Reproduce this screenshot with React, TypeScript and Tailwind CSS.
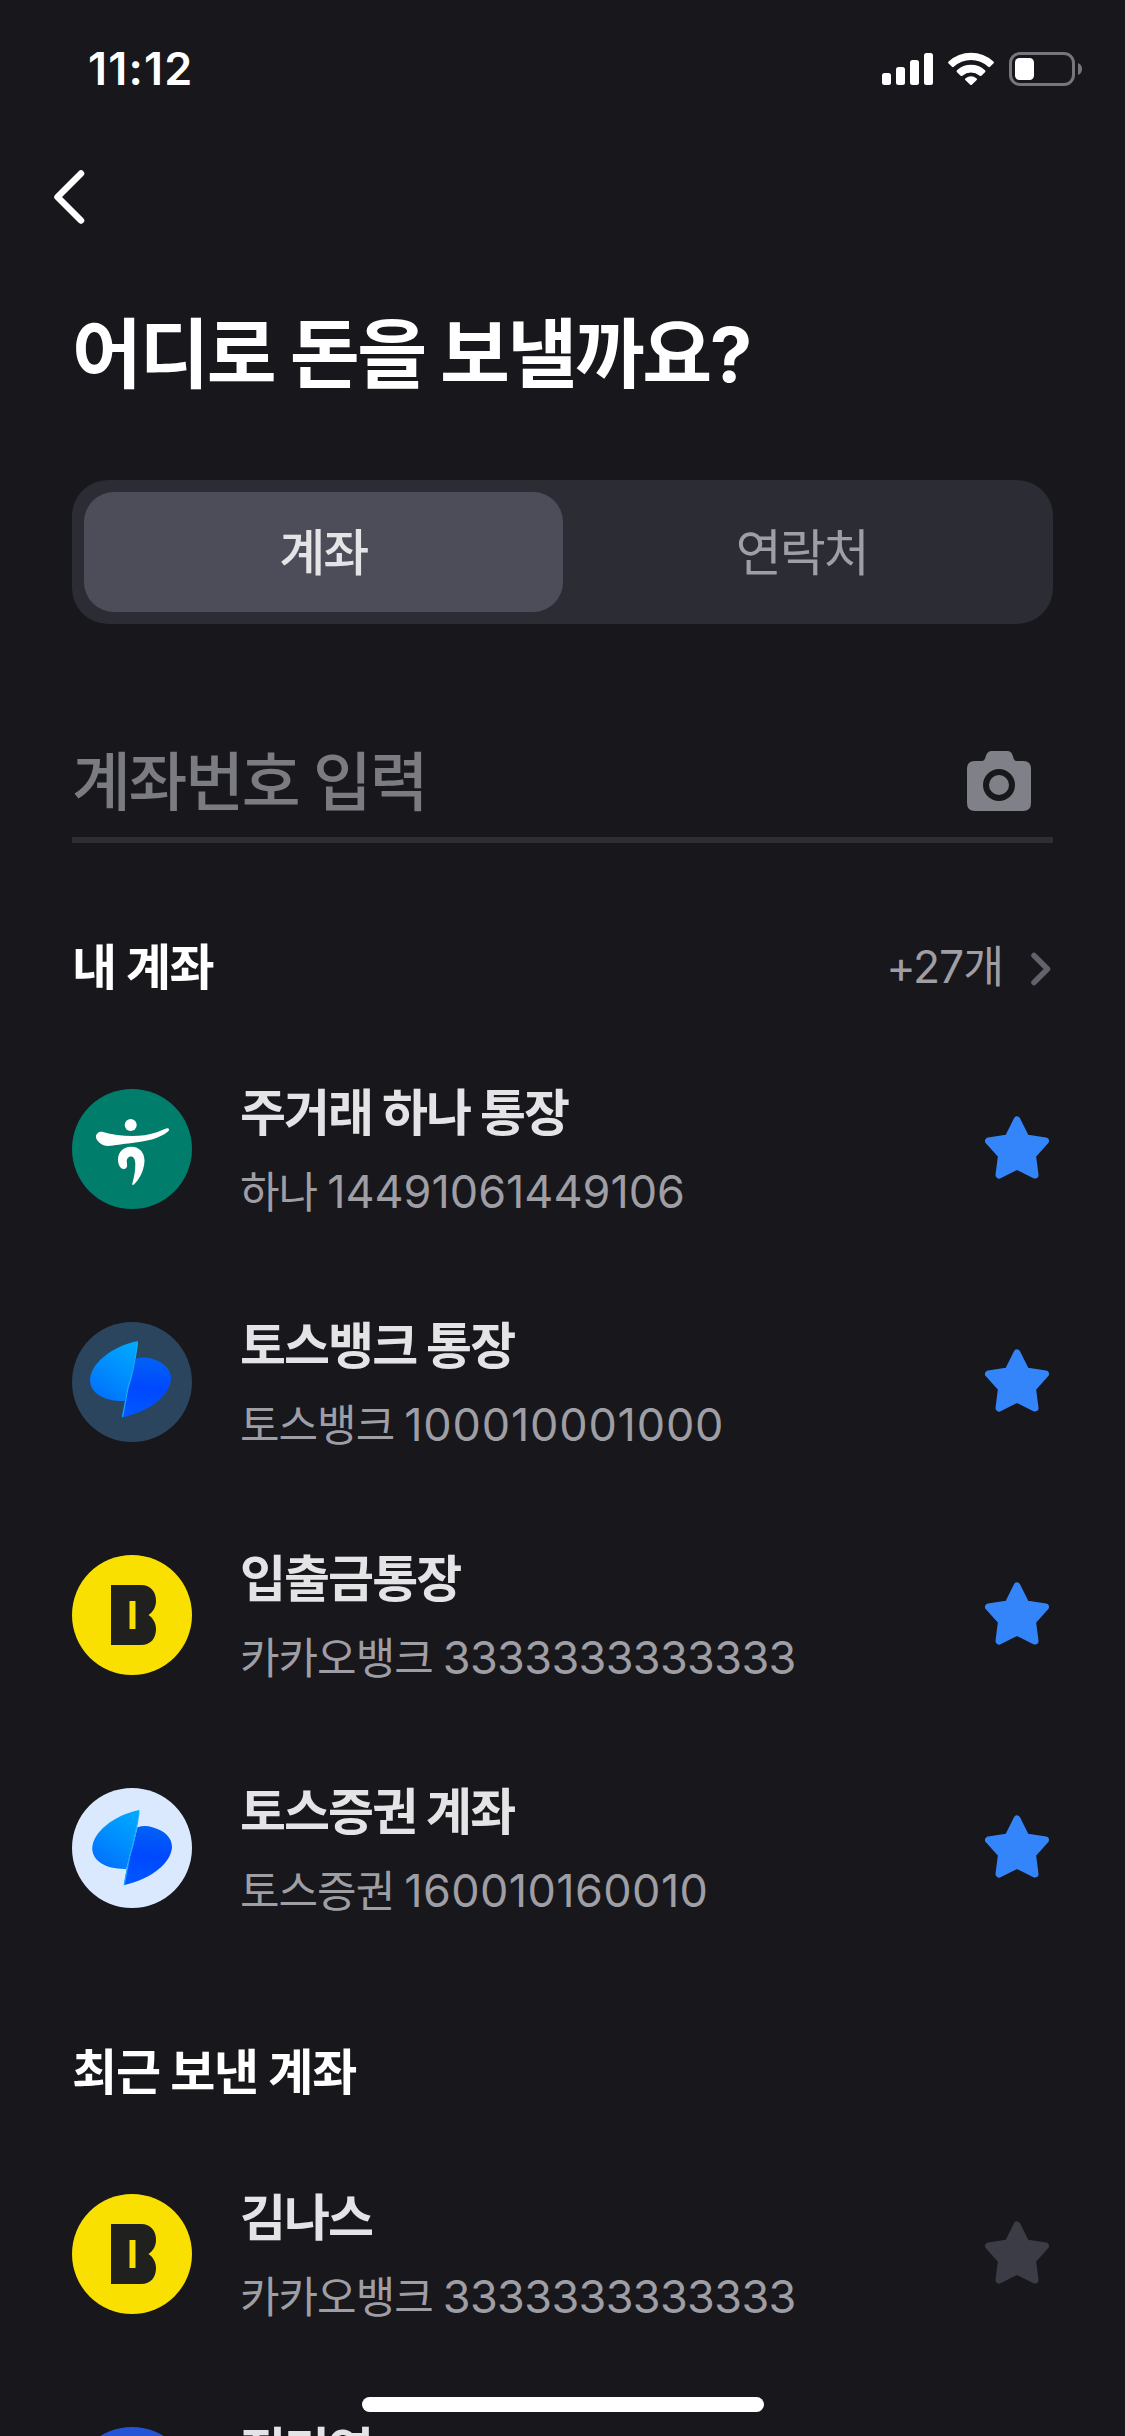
import { useState } from 'react';

type BankLogo = 'hana' | 'toss' | 'kakao' | 'toss-securities' | 'other';

interface Account {
  id: number;
  name: string;
  bank?: string;
  number?: string;
  logo: BankLogo;
  starred: boolean;
  numberClass?: string;
}

const MY_ACCOUNTS: Account[] = [
  { id: 1, name: '주거래 하나 통장', bank: '하나', number: '14491061449106', logo: 'hana', starred: true, numberClass: 'tracking-[0px]' },
  { id: 2, name: '토스뱅크 통장', bank: '토스뱅크', number: '100010001000', logo: 'toss', starred: true, numberClass: 'tracking-[0.8px]' },
  { id: 3, name: '입출금통장', bank: '카카오뱅크', number: '3333333333333', logo: 'kakao', starred: true, numberClass: 'tracking-[-0.65px]' },
  { id: 4, name: '토스증권 계좌', bank: '토스증권', number: '160010160010', logo: 'toss-securities', starred: true, numberClass: 'tracking-[0.4px]' },
];

const RECENT_ACCOUNTS: Account[] = [
  { id: 5, name: '김나스', bank: '카카오뱅크', number: '3333333333333', logo: 'kakao', starred: false, numberClass: 'tracking-[-0.65px]' },
  { id: 6, name: '전미영', logo: 'other', starred: false },
];

function StatusIcons() {
  return (
    <svg className="h-[34px] w-[201px]" viewBox="0 0 201 34" fill="none">
      <g fill="#fff">
        <rect x="0" y="21" width="9" height="12" rx="2.5" />
        <rect x="14" y="15" width="9" height="18" rx="2.5" />
        <rect x="28" y="8" width="9" height="25" rx="2.5" />
        <rect x="42" y="1" width="9" height="32" rx="2.5" />
        <path d="M66.6 9.5a33 33 0 0 1 44.8 0q1 1 0 2l-3.4 3.3q-.9.9-1.8 0a25.3 25.3 0 0 0-34.4 0q-.9.9-1.8 0L66.6 11.5q-1-1 0-2z" />
        <path d="M75 18.2a21 21 0 0 1 28 0q1 1 0 2l-3.6 3.5q-.9.8-1.8 0a13.5 13.5 0 0 0-17.2 0q-.9.8-1.8 0L75 20.2q-1-1 0-2z" />
        <path d="M83.3 26.5a9.5 9.5 0 0 1 11.4 0q.8.8 0 1.6l-4.9 4.6q-.8.7-1.6 0l-4.9-4.6q-.8-.8 0-1.6z" />
        <rect x="133" y="6" width="19" height="22" rx="4.5" />
      </g>
      <rect x="128.5" y="1.5" width="63" height="31" rx="9.5" stroke="#77777b" strokeWidth="3" />
      <path d="M196 11q4 1.5 4 6t-4 6z" fill="#77777b" />
    </svg>
  );
}

function CameraIcon() {
  return (
    <svg className="mb-0.5 h-[60px] w-[64px]" viewBox="0 0 64 60">
      <path
        d="M8 10h7q2 0 2.8-2l1.7-4.5Q21 0 24.5 0h16Q44 0 45.3 3.5L46.8 8q.7 2 2.7 2H56q8 0 8 8v34q0 8-8 8H8q-8 0-8-8V18q0-8 8-8z"
        fill="#808088"
      />
      <circle cx="32" cy="34" r="13" fill="none" stroke="#17171c" strokeWidth="6" />
    </svg>
  );
}

function StarIcon({ active }: { active: boolean }) {
  return (
    <svg className="h-[63px] w-[64px]" viewBox="0 0 64 63">
      <path
        d="M32 4 41 22 60.5 25 47.5 39.5 50 59 32 50 14 59 16.5 39.5 3.5 25 23 22Z"
        className={active ? 'fill-[#3485fa] stroke-[#3485fa]' : 'fill-[#3c3c47] stroke-[#3c3c47]'}
        strokeWidth="7"
        strokeLinejoin="round"
      />
    </svg>
  );
}

function TossMark({ id }: { id: string }) {
  return (
    <>
      <defs>
        <linearGradient id={`${id}-l`} x1="0.9" y1="0.05" x2="0.4" y2="1">
          <stop offset="0" stopColor="#00a8ff" />
          <stop offset="0.5" stopColor="#0090ff" />
          <stop offset="1" stopColor="#0074fb" />
        </linearGradient>
        <linearGradient id={`${id}-r`} x1="0.5" y1="0" x2="0.4" y2="1">
          <stop offset="0" stopColor="#0062f5" />
          <stop offset="0.5" stopColor="#0048ff" />
          <stop offset="1" stopColor="#0058ff" />
        </linearGradient>
      </defs>
      <path d="M64 36.5C69 35 74 35 79 36.5C92 40 99 47 99 57C98 72 80 89 50 95.5L53 79Z" fill={`url(#${id}-r)`} />
      <path d="M66 19C40 24 18 42 18 58C18 71 32 79.5 52.5 79Q61 50 66 19Z" fill={`url(#${id}-l)`} />
      <path d="M65.5 21Q62 48 56 66L50.5 95" stroke="#14b0ff" strokeWidth="1.2" fill="none" />
    </>
  );
}

function BankIcon({ logo, id }: { logo: BankLogo; id: number }) {
  return (
    <svg className="size-[120px] shrink-0" viewBox="0 0 120 120">
      {logo === 'hana' && (
        <>
          <circle cx="60" cy="60" r="60" fill="#007d6b" />
          <g fill="#fff">
            <circle cx="58.7" cy="36" r="6" />
            <path d="M31 43C47 47.5 68 49 84 43.5C89 41.5 92 40 95 39.2C97.3 39 97.7 41 96.3 42.3C87 50 74 52.5 60 54C50 55 43 56.5 36 57C30 57 24 52 24 48C24 44.5 27 42.3 31 43Z" />
            <path d="M59 57.8C68 57.8 72.5 64 72.5 72C72 82 67.5 90 62 95.5C60.5 96.5 60 95.5 60.3 94.5C62 88 63.5 82 63.3 75C63.2 70 61.5 67.5 59 67.5C56 67.5 54.5 70 54.8 73C55 76 55.5 76.5 54.8 78C53.5 80.5 51 80.7 49 79C46.5 76.5 46 73 46 70C46.3 63 51.5 57.8 59 57.8Z" />
          </g>
        </>
      )}
      {logo === 'toss' && (
        <>
          <circle cx="60" cy="60" r="60" fill="#2b455e" />
          <TossMark id={`toss-${id}`} />
        </>
      )}
      {logo === 'toss-securities' && (
        <>
          <circle cx="60" cy="60" r="60" fill="#dbe9ff" />
          <g transform="translate(2.5 3.2) scale(0.985)">
            <TossMark id={`toss-${id}`} />
          </g>
        </>
      )}
      {logo === 'kakao' && (
        <>
          <circle cx="60" cy="60" r="60" fill="#f9e000" />
          <path d="M39 30H69C79 30 84 37 84 46C84 52 81 57 76.5 60C81 63 84 68 84 74C84 83 79 90 69 90H39ZM57.5 46V74H63.5V46Z" fill="#20201e" fillRule="evenodd" />
        </>
      )}
      {logo === 'other' && <circle cx="60" cy="60" r="60" fill="#2455d6" />}
    </svg>
  );
}

function AccountRow({ account }: { account: Account }) {
  const [starred, setStarred] = useState(account.starred);

  return (
    <li className="flex h-[233px] items-center">
      <BankIcon logo={account.logo} id={account.id} />
      <div className="ml-12 flex-1 pt-[7px] whitespace-nowrap">
        <div className="h-[60px] text-[50px] leading-[60px] font-bold tracking-[-1.95px] text-[#e4e4e6]">{account.name}</div>
        <div className="mt-[19px] flex h-[60px] items-baseline gap-[10px] leading-[60px] text-[#9e9ea4]">
          {account.bank && <span className="text-[43px] tracking-[-1px]">{account.bank}</span>}
          {account.number && <span className={`text-[45px] ${account.numberClass}`}>{account.number}</span>}
        </div>
      </div>
      <button type="button" className="mr-1 mb-[3px]" onClick={() => setStarred(!starred)}>
        <StarIcon active={starred} />
      </button>
    </li>
  );
}

export default function App() {
  const [tab, setTab] = useState<'account' | 'contact'>('account');

  return (
    <div className="relative h-[2436px] w-[1125px] overflow-hidden bg-[#17171c] font-['Inter','Noto_Sans_CJK_KR',sans-serif] text-white">
      <header className="flex h-[138px] items-center justify-between pr-[42px] pl-[88px]">
        <span className="text-[45px] leading-[54px] font-semibold tracking-[1.2px]">11:12</span>
        <StatusIcons />
      </header>

      <nav className="h-[118px] pt-[30px] pl-[52px]">
        <svg className="h-[58px] w-[36px]" viewBox="0 0 36 58" fill="none">
          <path d="M29 5.5 5.5 29 29 52.500" stroke="#fff" strokeWidth="6.5" strokeLinecap="round" strokeLinejoin="round" />
        </svg>
      </nav>

      <main className="px-[72px]">
        <h1 className="mt-[50px] h-24 text-[76px] leading-[96px] font-bold tracking-[-2.5px] whitespace-nowrap">어디로 돈을 보낼까요?</h1>

        <div className="mt-[78px] grid h-36 grid-cols-2 rounded-[36px] bg-[#2c2c35] p-3">
          <button
            type="button"
            onClick={() => setTab('account')}
            className={`rounded-[30px] pt-0.5 text-[50px] tracking-[-2px] ${tab === 'account' ? 'bg-[#4d4d59] font-medium text-[#e4e4e6]' : 'text-[#9e9ea4]'}`}
          >
            계좌
          </button>
          <button
            type="button"
            onClick={() => setTab('contact')}
            className={`rounded-[30px] pt-0.5 text-[50px] tracking-[-2px] ${tab === 'contact' ? 'bg-[#4d4d59] font-medium text-[#e4e4e6]' : 'text-[#9e9ea4]'}`}
          >
            연락처
          </button>
        </div>

        <div className="mt-[108px] flex h-[111px] items-center justify-between border-b-[6px] border-[#2e2d34] pr-[22px] pb-[6px]">
          <span className="text-[64px] leading-[80px] font-medium tracking-[-2.3px] text-[#7b7b82]">계좌번호 입력</span>
          <CameraIcon />
        </div>

        <section>
          <div className="mt-[91.5px] flex h-[68px] items-center justify-between">
            <h2 className="pb-0.5 text-[49px] leading-[68px] font-bold tracking-[-1.4px]">내 계좌</h2>
            <div className="flex items-center pr-px">
              <span className="mr-[26px] pb-0.5 text-[44.5px] tracking-[-1.1px] text-[#9e9ea4]">+27개</span>
              <svg className="h-[36px] w-[23px]" viewBox="0 0 23 36" fill="none">
                <path d="M5 4.5 18.5 18 5 31.5" stroke="#62626d" strokeWidth="5.5" strokeLinecap="round" strokeLinejoin="round" />
              </svg>
            </div>
          </div>
          <ul className="mt-[30px]">
            {MY_ACCOUNTS.map(account => (
              <AccountRow key={account.id} account={account} />
            ))}
          </ul>
        </section>

        <section>
          <h2 className="mt-[74px] h-[68px] text-[49px] leading-[68px] font-bold tracking-[-1.2px]">최근 보낸 계좌</h2>
          <ul className="mt-[31px]">
            {RECENT_ACCOUNTS.map(account => (
              <AccountRow key={account.id} account={account} />
            ))}
          </ul>
        </section>
      </main>

      {/* home indicator */}
      <div className="absolute top-[2397px] left-[362px] h-[15px] w-[402px] rounded-full bg-white" />
    </div>
  );
}
